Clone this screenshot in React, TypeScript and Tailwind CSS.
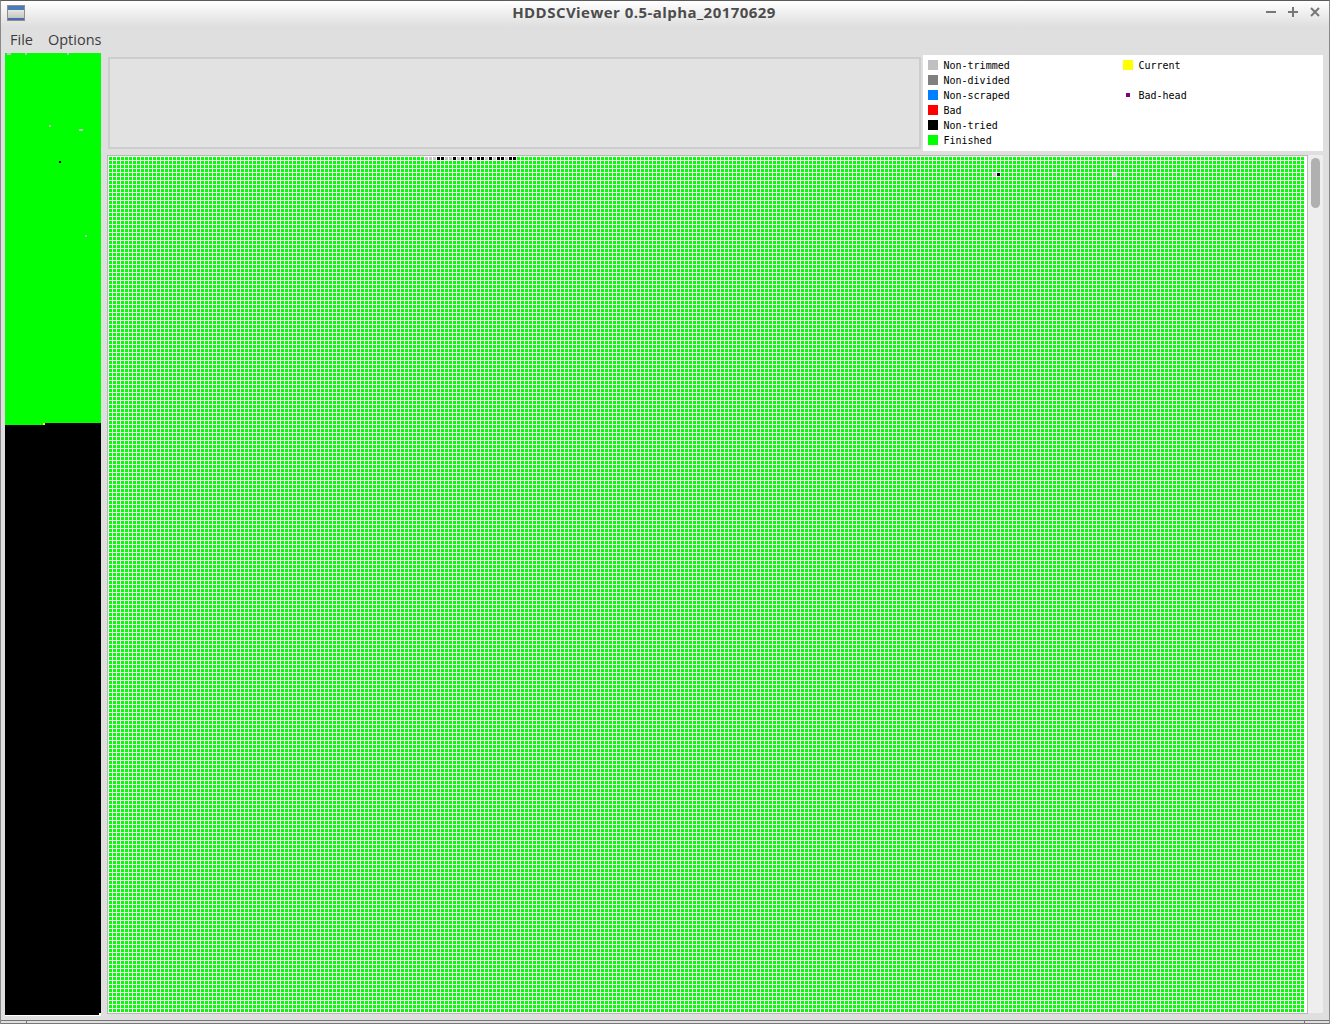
import React from "react";

const GRAY = "#c0c0c0";
const COLS = 299;
const ROWS = 214;

// non-finished cells of the block map: [col, row, colour]
const topRow: [number, string][] = [
  [79, GRAY], [80, GRAY], [81, GRAY], [82, "#000"], [83, "#000"], [84, GRAY], [85, GRAY],
  [86, "#000"], [87, GRAY], [88, "#000"], [89, GRAY], [90, "#000"], [91, GRAY], [92, "#000"],
  [93, "#000"], [94, GRAY], [95, "#000"], [96, GRAY], [97, "#000"], [98, "#000"], [99, GRAY],
  [100, "#000"], [101, "#000"],
];
const cells: [number, number, string][] = [
  ...topRow.map(([c, color]): [number, number, string] => [c, 0, color]),
  [221, 4, GRAY],
  [222, 4, "#000"],
  [251, 4, GRAY],
];

const legendLeft = [
  { label: "Non-trimmed", color: "bg-[#c0c0c0]" },
  { label: "Non-divided", color: "bg-[#808080]" },
  { label: "Non-scraped", color: "bg-[#0080ff]" },
  { label: "Bad", color: "bg-[#ff0000]" },
  { label: "Non-tried", color: "bg-[#000000]" },
  { label: "Finished", color: "bg-[#00ff00]" },
];

const LegendRow = ({ label, color }: { label: string; color: string }) => (
  <div className="flex h-[15px] items-start gap-[5.5px] leading-[15px]">
    <span className={`mt-[2px] h-[10px] w-[10px] ${color}`}></span>
    <span>{label}</span>
  </div>
);

const OverviewBar = () => (
  <svg className="block h-[963px] w-[96px] shrink-0" viewBox="0 0 96 963" shapeRendering="crispEdges">
    <rect width="96" height="962" fill="#000" />
    <rect y="962" width="96" height="1" fill="#fff" />
    <rect width="96" height="370" fill="#0f0" />
    <rect y="370" width="38" height="2" fill="#0f0" />
    <rect x="38" y="370" width="2" height="2" fill="#ff0" />
    <rect x="2" y="0" width="4" height="2" fill={GRAY} />
    <rect x="20" y="0" width="2" height="2" fill={GRAY} />
    <rect x="62" y="0" width="2" height="2" fill={GRAY} />
    <rect x="44" y="72" width="2" height="2" fill={GRAY} />
    <rect x="74" y="76" width="4" height="2" fill={GRAY} />
    <rect x="54" y="108" width="2" height="2" fill="#000" />
    <rect x="80" y="182" width="2" height="2" fill={GRAY} />
    <rect x="94" y="960" width="2" height="3" fill="#fff" />
  </svg>
);

const BlockMap = () => (
  <svg className="block h-[856px] w-[1196px]" viewBox="0 0 1196 856" shapeRendering="crispEdges">
    <defs>
      <pattern id="cell" width="4" height="4" patternUnits="userSpaceOnUse">
        <rect width="3" height="3" fill="#0f0" />
      </pattern>
    </defs>
    <rect width={COLS * 4} height={ROWS * 4} fill="#fff" />
    <rect width={COLS * 4} height={ROWS * 4} fill="url(#cell)" />
    {cells.map(([c, r, color]) => (
      <rect key={`${c}-${r}`} x={c * 4} y={r * 4} width="3" height="3" fill={color} />
    ))}
  </svg>
);

const App = () => {
  return (
    <div className="flex h-[1024px] w-[1330px] flex-col overflow-hidden border-x border-t border-x-[#8a8a8a] border-t-[#5a5a5a] bg-[#dfdfdf] font-['Open_Sans',sans-serif]">
      {/* TITLE BAR */}
      <div className="relative flex h-[25px] shrink-0 items-center justify-center bg-gradient-to-b from-[#ffffff] to-[#dfdfdf] pb-[2px] pr-[42px]">
        <svg className="absolute left-[6px] top-[4px] h-[16px] w-[18px]" viewBox="0 0 18 16" shapeRendering="crispEdges">
          <defs>
            <linearGradient id="iconBody" x1="0" y1="0" x2="0" y2="1">
              <stop offset="0" stopColor="#e6e6e4" />
              <stop offset="1" stopColor="#c4c4c0" />
            </linearGradient>
          </defs>
          <rect width="18" height="16" fill="#8a8f96" />
          <rect x="1" y="1" width="16" height="4" fill="#4a7ab8" />
          <rect x="1" y="5" width="16" height="8" fill="url(#iconBody)" />
          <rect x="1" y="13" width="16" height="2" fill="#4a6aa8" />
        </svg>
        <span className="text-[15px] font-bold leading-[23px] tracking-[0.45px] text-[#4c4c4c]">HDDSCViewer 0.5-alpha_20170629</span>
        <div className="absolute right-[9px] top-[6px] flex gap-[12px]">
          <svg className="h-[10px] w-[10px]" viewBox="0 0 10 10" stroke="#777" strokeWidth="2" shapeRendering="crispEdges">
            <path d="M0 5H10" />
          </svg>
          <svg className="h-[10px] w-[10px]" viewBox="0 0 10 10" stroke="#777" strokeWidth="2" shapeRendering="crispEdges">
            <path d="M0 5H10M5 0V10" />
          </svg>
          <svg className="h-[10px] w-[10px]" viewBox="0 0 10 10" stroke="#777" strokeWidth="2">
            <path d="M1 1L9 9M9 1L1 9" />
          </svg>
        </div>
      </div>

      {/* MENU */}
      <div className="flex h-[27px] shrink-0 items-center gap-[15px] pl-[9px] text-[14.5px] text-[#3c3c3c]">
        <span>File</span>
        <span>Options</span>
      </div>

      {/* BODY */}
      <div className="flex min-h-0 flex-1 pl-[4px]">
        <OverviewBar />
        <div className="ml-[6px] flex min-w-0 flex-1 flex-col pt-[2px]">
          {/* TOP */}
          <div className="flex h-[96px] shrink-0 items-start">
            <div className="ml-[1px] mt-[2px] h-[92px] w-[813px] border-2 border-[#cdcdcd] bg-[#e2e2e2]"></div>
            <div className="ml-[2px] flex h-[96px] w-[400px] bg-white pl-[5px] pt-[3px] font-['DejaVu_Sans_Mono',monospace] text-[10px] text-black">
              <div className="w-[195px]">
                {legendLeft.map((item) => (
                  <LegendRow key={item.label} label={item.label} color={item.color} />
                ))}
              </div>
              <div>
                <LegendRow label="Current" color="bg-[#ffff00]" />
                <div className="h-[15px]"></div>
                <div className="flex h-[15px] items-start gap-[5.5px] leading-[15px]">
                  <span className="mt-[2px] flex h-[10px] w-[10px] items-center justify-center">
                    <span className="h-[4px] w-[4px] bg-[#800080]"></span>
                  </span>
                  <span>Bad-head</span>
                </div>
              </div>
            </div>
          </div>
          {/* MAP */}
          <div className="mt-[4px] flex h-[859px] shrink-0">
            <div className="h-[859px] w-[1201px] overflow-hidden border border-[#b8b8b8] bg-white pl-[1px] pt-[1px]">
              <BlockMap />
            </div>
            <div className="h-[858px] w-[15px] bg-[#eeeeee] pl-[3px] pt-[3px]">
              <div className="h-[50px] w-[9px] rounded-[5px] bg-[#b0b0b0]"></div>
            </div>
          </div>
        </div>
      </div>

      {/* STATUS */}
      <div className="flex h-[4px] shrink-0 justify-between border-y border-[#777]">
        <div className="w-[26px] border-r border-[#777]"></div>
        <div className="w-[25px] border-l border-[#777]"></div>
      </div>
    </div>
  );
};

export default App;
